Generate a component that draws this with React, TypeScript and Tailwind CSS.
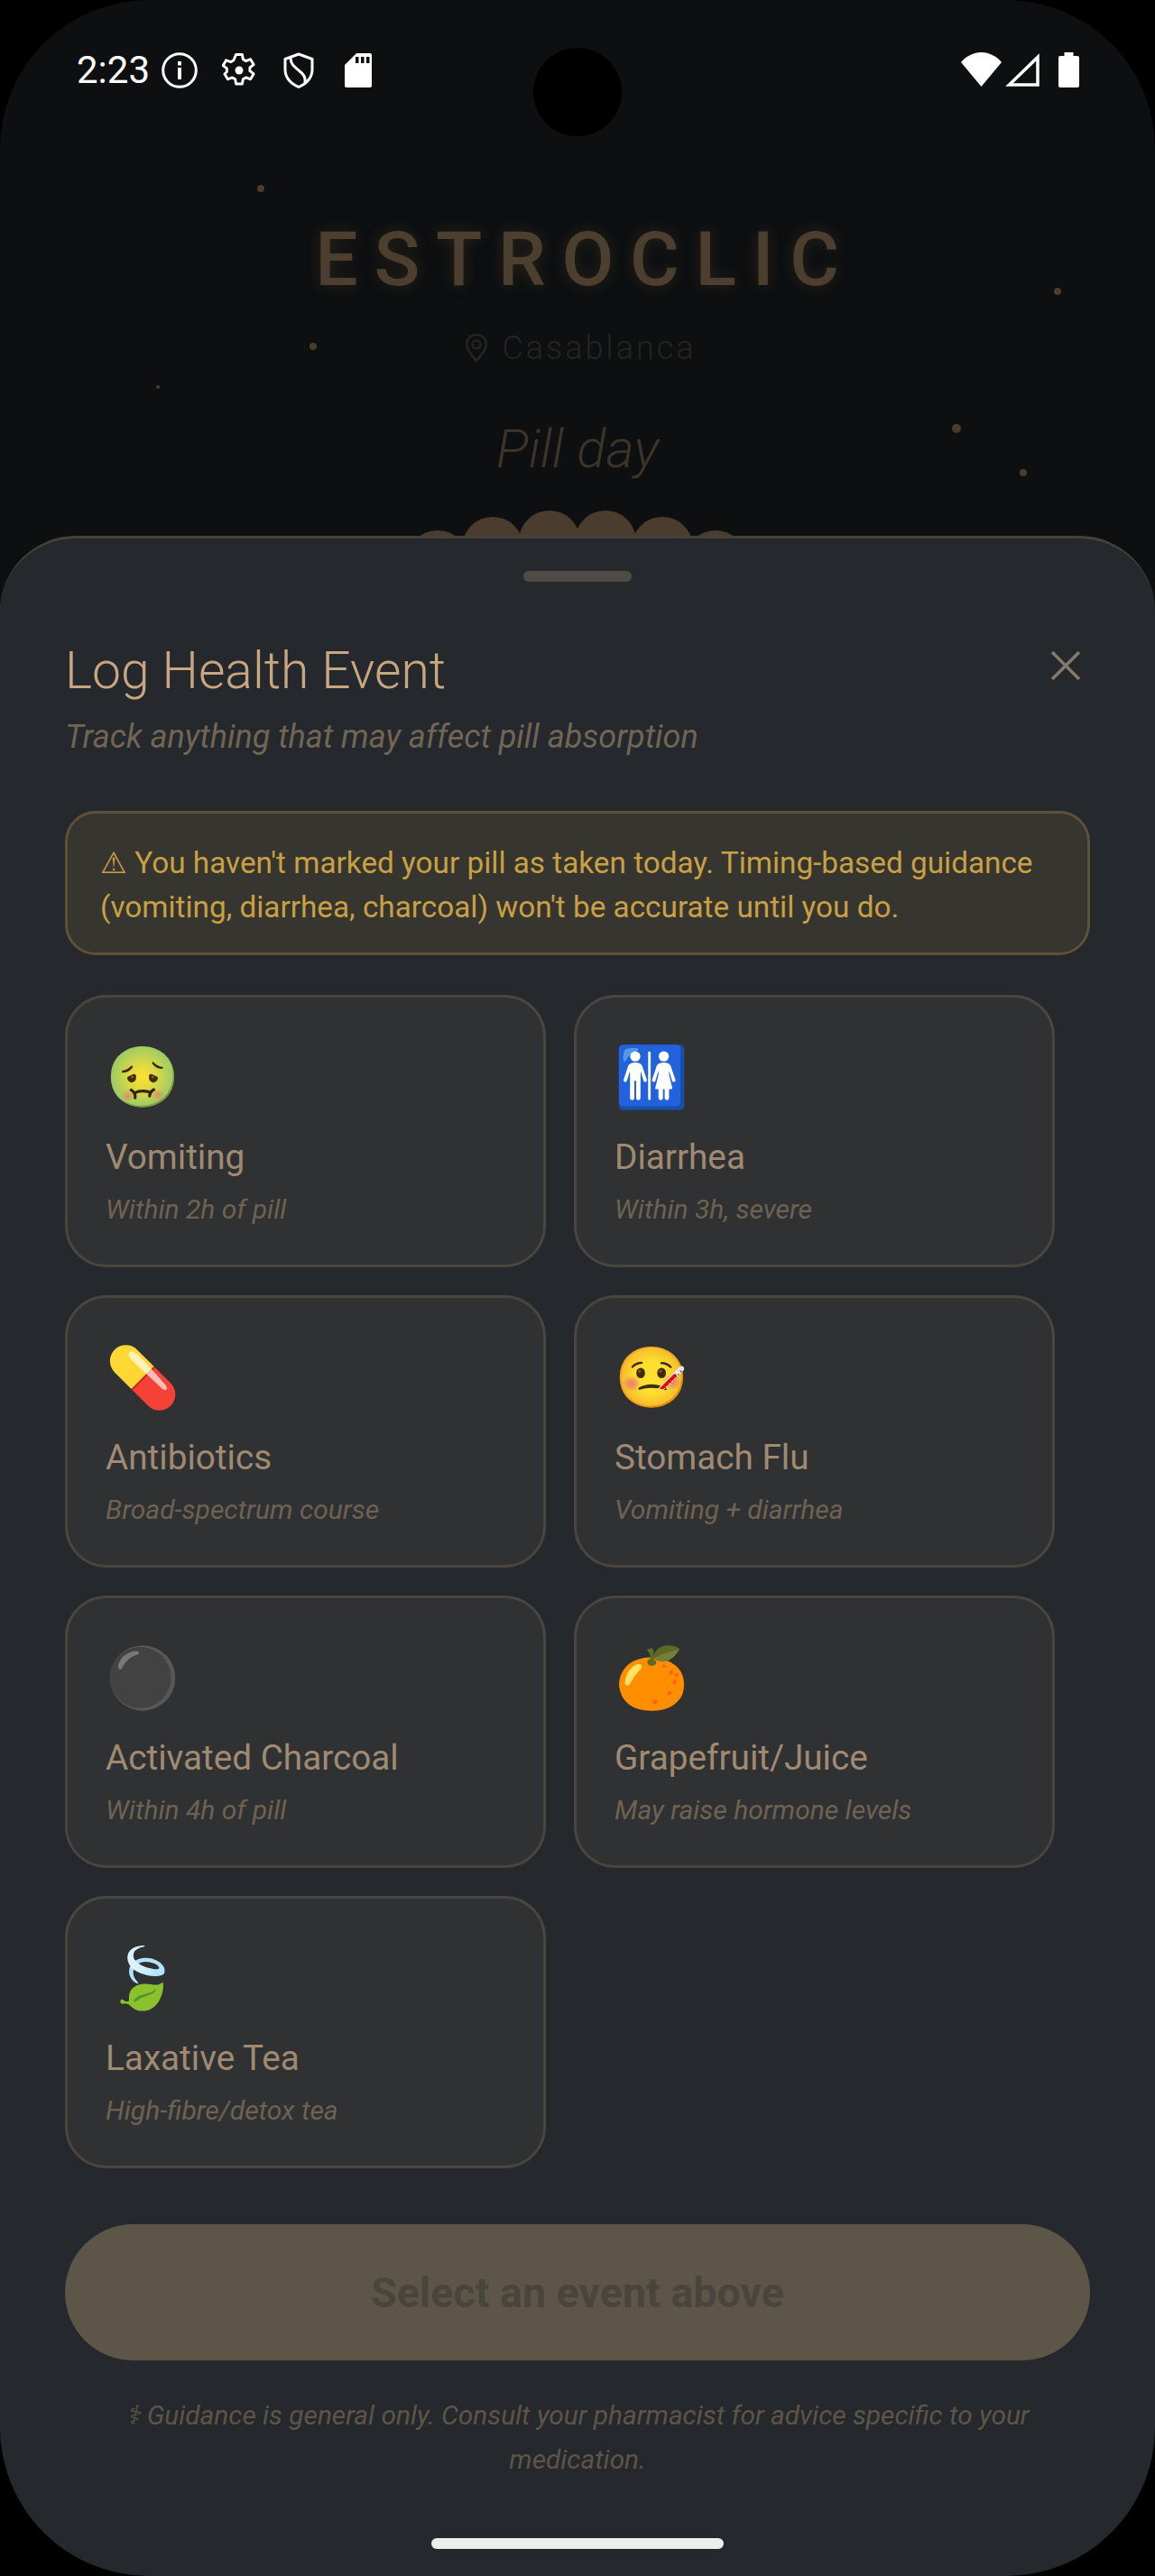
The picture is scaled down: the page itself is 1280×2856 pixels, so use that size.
import React from "react";

const items = [
  ["🤢", "Vomiting", "Within 2h of pill"],
  ["🚻", "Diarrhea", "Within 3h, severe"],
  ["💊", "Antibiotics", "Broad-spectrum course"],
  ["🤒", "Stomach Flu", "Vomiting + diarrhea"],
  ["⚫", "Activated Charcoal", "Within 4h of pill"],
  ["🍊", "Grapefruit/Juice", "May raise hormone levels"],
  ["🍃", "Laxative Tea", "High-fibre/detox tea"],
];

const dots = [
  { l: 285, t: 205, s: 8 },
  { l: 1168, t: 319, s: 8 },
  { l: 343, t: 380, s: 8 },
  { l: 173, t: 427, s: 4 },
  { l: 1055, t: 470, s: 10 },
  { l: 1130, t: 520, s: 8 },
];
const bumps = [
  { x: 485, t: 588, d: 68, n: "" },
  { x: 546, t: 573, d: 68, n: "" },
  { x: 609, t: 566, d: 68, n: "14" },
  { x: 671, t: 566, d: 68, n: "15" },
  { x: 734, t: 573, d: 68, n: "" },
  { x: 793, t: 588, d: 68, n: "" },
];

function StatusBar() {
  return (
    <div className="flex h-[156px] items-start justify-between pl-[85px] pr-[84px] pt-[58px] text-white">
      <div className="flex items-center">
        <span className="w-[94px] text-[42px] leading-[40px]">2:23</span>
        <svg width="40" height="40" viewBox="0 0 40 40" fill="none" stroke="white">
          <circle cx="20" cy="20" r="18.3" strokeWidth="3" />
          <rect x="18" y="17" width="4" height="13" fill="white" stroke="none" />
          <rect x="18" y="10" width="4" height="4.5" fill="white" stroke="none" />
        </svg>
        <svg className="ml-[27px]" width="38" height="40" viewBox="1 1 22 22" fill="none" stroke="white" strokeWidth="1.7" strokeLinejoin="round">
          <path d="M10 1.9h4l.5 3 1.9 1.1 2.9-1.1 2 3.400-2.400 1.900v2.200l2.400 1.900-2 3.400-2.900-1.100-1.900 1.100-.5 3h-4l-.5-3-1.900-1.100-2.900 1.100-2-3.400L4.100 13v-2.200L1.700 8.900l2-3.400 2.900 1.100 1.900-1.100z" />
          <circle cx="12" cy="12" r="2.600" fill="white" stroke="none" />
        </svg>
        <svg className="ml-[30px]" width="34" height="40" viewBox="0 0 34 40" fill="none" stroke="white" strokeWidth="3" strokeLinejoin="round">
          <path d="M17 2 32 7.500V19c0 9-6 15.500-15 19.500C8 34.500 2 28 2 19V7.500z" />
          <path d="M8 6c0 7 4 10 9 14s8 7 7 14" />
        </svg>
        <svg className="ml-[34px]" width="30" height="38" viewBox="0 0 30 38">
          <path fillRule="evenodd" fill="white" d="M13 0h15a2 2 0 0 1 2 2v34a2 2 0 0 1-2 2H2a2 2 0 0 1-2-2V13zM12 4v7h3.500V4zM18 4v7h3.500V4zM24 4v7h3.500V4z" />
        </svg>
      </div>
      <div className="flex items-start">
        <svg width="45" height="38" viewBox="0 0 45 38">
          <path fill="white" d="M0 11C6 4 14 0 22.500 0S39 4 45 11L22.500 38z" />
        </svg>
        <svg className="ml-[4px] mt-[1px]" width="38" height="37" viewBox="0 0 38 37" fill="none" stroke="white" strokeWidth="3.500">
          <path d="M36 4.500V35H4.500z" />
        </svg>
        <svg className="ml-[21px]" width="23" height="39" viewBox="0 0 23 39">
          <path fill="white" d="M6.500 0h10v4H21a2 2 0 0 1 2 2v31a2 2 0 0 1-2 2H2a2 2 0 0 1-2-2V6a2 2 0 0 1 2-2h4.500z" />
        </svg>
      </div>
    </div>
  );
}

function Card({ e, t, s }: { e: string; t: string; s: string }) {
  return (
    <div className="h-[302px] rounded-[46px] border-[3px] border-[#4a453e] bg-[#303133] pl-[42px] pt-[49px]">
      <div className="h-[80px] text-[66px] leading-[80px]">{e}</div>
      <div className="mt-[24px] text-[38.7px] leading-[48px] text-[#a08a72]">{t}</div>
      <div className="mt-[14px] text-[30px] leading-[40px] italic text-[#6e6253]">{s}</div>
    </div>
  );
}

export default function App() {
  return (
    <div className="relative h-[2856px] w-[1280px] overflow-hidden bg-black font-['Roboto',sans-serif]">
      <div className="h-full rounded-[165px] bg-[#0d0f11]">
        <StatusBar />
        <div className="flex flex-col items-center">
          <div className="mt-[85px] pl-[17px] text-[84px] font-medium leading-[94px] tracking-[17.700px] text-[#4d3f30] [text-shadow:0_0_16px_rgba(120,90,50,0.3)]">
            ESTROCLIC
          </div>
          <div className="mt-[29px] flex items-center gap-[15px] pl-[7px]">
            <svg width="26" height="32" viewBox="0 0 26 32" fill="none" stroke="#262421" strokeWidth="2.500">
              <path d="M13 30C6 22 2 17 2 12a11 11 0 0 1 22 0c0 5-4 10-11 18z" />
              <circle cx="13" cy="12" r="4.500" />
            </svg>
            <span className="text-[36px] font-light leading-[44px] tracking-[3px] text-[#262421]">Casablanca</span>
          </div>
          <div className="mt-[53px] text-[60px] font-light italic leading-[74px] text-[#3c3329]">Pill day</div>
        </div>
      </div>

      <div className="absolute left-[591px] top-[53px] size-[98px] rounded-full bg-black" />
      {dots.map((d, i) => (
        <div key={i} className="absolute rounded-full bg-[#4a3d2e]" style={{ left: d.l, top: d.t, width: d.s, height: d.s }} />
      ))}
      {bumps.map((b, i) => (
        <div key={i} className="absolute rounded-full bg-[#4a3d2e] pt-[25px] text-center text-[34px] font-medium leading-[40px] text-[#0d0f11]" style={{ left: b.x - b.d / 2, top: b.t, width: b.d, height: b.d }}>
          {b.n}
        </div>
      ))}

      <div className="absolute inset-x-0 bottom-0 top-[594px] rounded-t-[84px] rounded-b-[165px] border-t-[3px] border-[#45413b] bg-[#25282c]">
        <div className="mx-auto mt-[36px] h-[12px] w-[120px] rounded-full bg-[#4f4b46]" />
        <div className="relative px-[72px]">
          <div className="mt-[65px] text-[57px] font-light leading-[68px] text-[#c8a67f]">Log Health Event</div>
          <svg className="absolute right-[82px] top-[11px]" width="34" height="34" viewBox="0 0 34 34" stroke="#85796b" strokeWidth="3.500">
            <path d="M2 2l30 30M32 2L2 32" />
          </svg>
          <div className="mt-[15px] text-[36px] italic leading-[48px] text-[#716555]">Track anything that may affect pill absorption</div>

          <div className="mt-[58px] rounded-[34px] border-[3px] border-[#5d5138] bg-[#363530] px-[36px] pb-[26px] pt-[30px] text-[33.300px] leading-[49px] text-[#c9a043]">
            ⚠ You haven't marked your pill as taken today. Timing-based guidance (vomiting, diarrhea, charcoal) won't be accurate until you do.
          </div>

          <div className="mt-[44px] grid grid-cols-[533px_533px] gap-x-[31px] gap-y-[31px]">
            {items.map((it) => (
              <Card key={it[1]} e={it[0]} t={it[1]} s={it[2]} />
            ))}
          </div>

          <div className="mt-[62px] flex h-[151px] items-center justify-center rounded-full bg-[#5c5548] pt-[2px] text-[46.600px] font-bold text-[#4a453c]">
            Select an event above
          </div>
          <div className="mt-[36px] px-[36px] text-center text-[29.800px] italic leading-[49px] text-[#5e5549]">
            ⚕ Guidance is general only. Consult your pharmacist for advice specific to your medication.
          </div>
        </div>
        <div className="absolute bottom-[30px] left-[478px] h-[12px] w-[324px] rounded-full bg-[#eeeeee]" />
      </div>
    </div>
  );
}
